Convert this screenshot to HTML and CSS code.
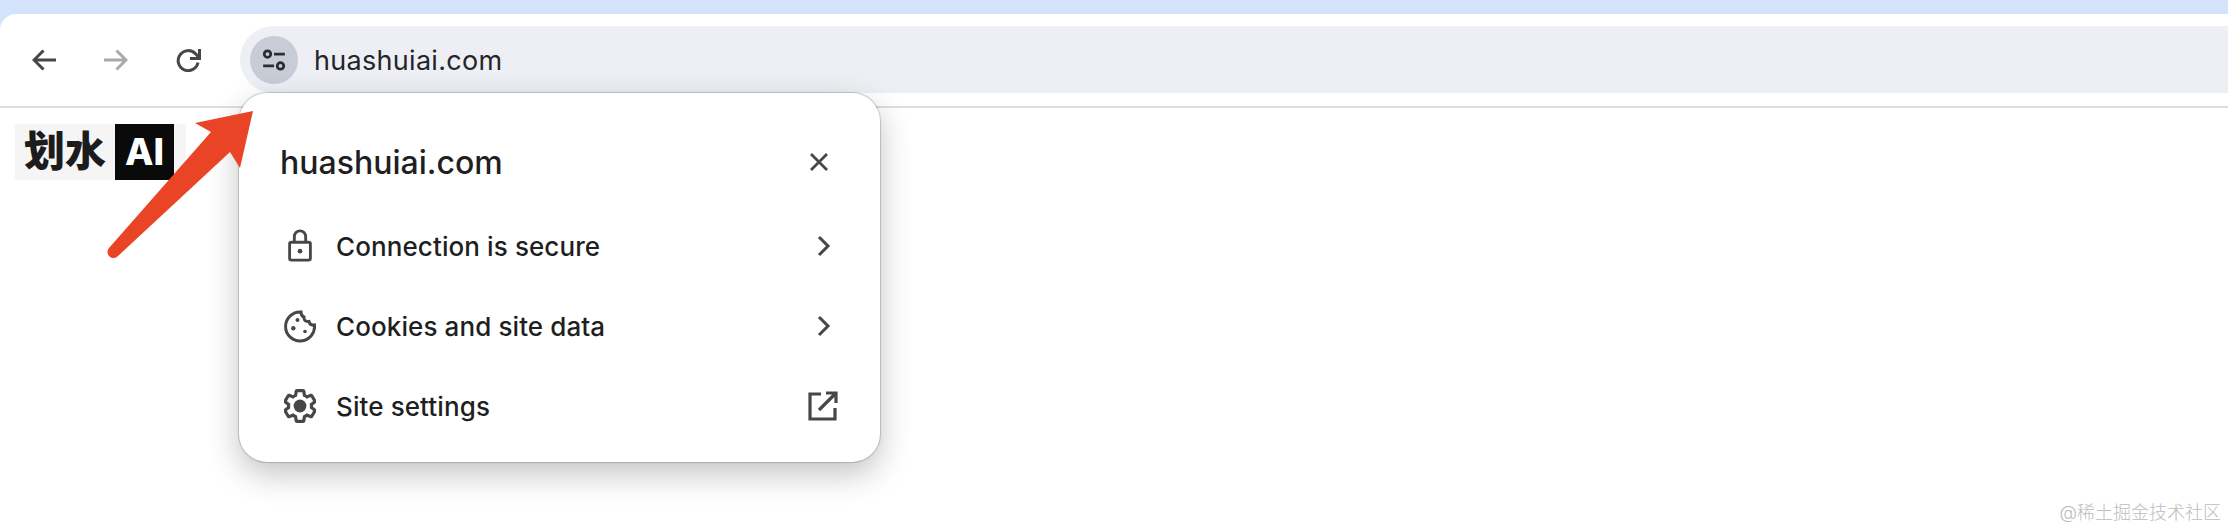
FILE: index.html
```html
<!DOCTYPE html>
<html lang="en">
<head>
  <meta charset="UTF-8" />
  <title>huashuiai.com</title>
  <link rel="stylesheet" href="styles.css">
</head>
<body>
  <div class="toolbar">
    <div class="nav">
      <svg class="nav-icon" viewBox="0 0 24 24"><path d="M24 12H2M11.5 2.5 2 12l9.500 9.500"/></svg>
      <svg class="nav-icon disabled" viewBox="0 0 24 24"><path d="M0 12h22M12.500 2.500 22 12l-9.500 9.500"/></svg>
      <svg class="nav-icon" viewBox="0 0 25 24"><path d="M22 14.500A10 10 0 1 1 19.500 5.800L23 9.500M23.500 1v9.500H14"/></svg>
    </div>
    <div class="omnibox">
      <div class="chip">
        <svg viewBox="0 0 24 24">
          <circle cx="6" cy="6.500" r="3"/>
          <path d="M12 6.500h10M2 17.500h10"/>
          <circle cx="18" cy="17.500" r="3"/>
        </svg>
      </div>
      <span class="url">huashuiai.com</span>
    </div>
  </div>

  <div class="content">
    <div class="logo"><span class="logo-cn">划水</span><span class="logo-ai">AI</span></div>
  </div>
  <div class="watermark">@稀土掘金技术社区</div>

  <div class="popup">
    <div class="popup-head">
      <h1>huashuiai.com</h1>
      <svg class="close" viewBox="0 0 20 20"><path d="M2 2l16 16M18 2 2 18"/></svg>
    </div>
    <div class="row">
      <svg class="row-icon" viewBox="0 0 32 36">
        <rect x="5" y="14" width="22" height="19" rx="2"/>
        <path d="M10 14V8a6 6 0 0 1 12 0v6"/>
        <circle class="dot" cx="16" cy="23.500" r="2.500"/>
      </svg>
      <span class="row-label">Connection is secure</span>
      <svg class="chevron" viewBox="0 0 30 24"><path d="M11 3l9 9-9 9"/></svg>
    </div>
    <div class="row">
      <svg class="row-icon" viewBox="0 0 32 32">
        <path d="M17 2A14.500 14.500 0 1 0 30.500 15c-3 .5-5-1-5.500-3.500-3 .5-5.500-1.500-5-4.500-2-.5-3-2.500-3-5z"/>
        <circle class="dot" cx="13.500" cy="10" r="2"/>
        <circle class="dot" cx="9.300" cy="18.300" r="2.200"/>
        <circle class="dot" cx="21" cy="21.500" r="1.800"/>
      </svg>
      <span class="row-label">Cookies and site data</span>
      <svg class="chevron" viewBox="0 0 30 24"><path d="M11 3l9 9-9 9"/></svg>
    </div>
    <div class="row">
      <svg class="row-icon" viewBox="2 2 20 20">
        <path class="thin" d="M19.140 12.940c.04-.3.06-.61.06-.94 0-.32-.02-.64-.07-.94l2.030-1.580c.18-.14.23-.41.12-.61l-1.920-3.320c-.12-.22-.37-.29-.59-.22l-2.390.96c-.5-.38-1.030-.7-1.620-.94l-.36-2.540c-.04-.24-.24-.41-.48-.41h-3.840c-.24 0-.43.17-.47.41l-.36 2.540c-.59.24-1.130.57-1.620.94l-2.390-.96c-.22-.08-.47 0-.59.22L2.740 8.870c-.12.21-.08.47.12.61l2.030 1.580c-.05.3-.09.63-.09.94s.02.64.07.94l-2.030 1.580c-.18.14-.23.41-.12.61l1.920 3.320c.12.22.37.29.59.22l2.390-.96c.5.38 1.030.7 1.620.94l.36 2.540c.05.24.24.41.48.41h3.840c.24 0 .44-.17.47-.41l.36-2.540c.59-.24 1.130-.56 1.620-.94l2.390.96c.22.08.47 0 .59-.22l1.920-3.320c.12-.22.07-.47-.12-.61l-2.010-1.580z"/>
        <circle class="dot" cx="12" cy="12" r="4"/>
      </svg>
      <span class="row-label">Site settings</span>
      <svg class="external" viewBox="0 0 30 30"><path d="M13 3H2v25h25V17M11 19 28 2M18 2h10v10"/></svg>
    </div>
  </div>

  <svg class="arrow" viewBox="0 0 160 160">
    <path d="M150 5 137 62 127 46 15 150a6 6 0 0 1-9-8L108 26 92 17z"/>
  </svg>
</body>
</html>
```

FILE: styles.css
```css
html, body {
  margin: 0;
  height: 100%;
}
body {
  display: flex;
  flex-direction: column;
  height: 530px;
  overflow: hidden;
  background: #d3e3fb;
  font-family: Inter, "Noto Sans CJK SC", sans-serif;
  color: #1f1f1f;
}

/* browser toolbar */
.toolbar {
  display: flex;
  align-items: flex-start;
  flex: none;
  height: 92px;
  margin-top: 14px;
  padding-top: 12px;
  padding-left: 32px;
  box-sizing: border-box;
  background: #ffffff;
  border-top-left-radius: 16px;
}
.nav {
  display: flex;
  align-items: center;
  gap: 48px;
  height: 68px;
  margin-right: 39px;
}
.nav-icon {
  width: 24px;
  height: 24px;
  fill: none;
  stroke: #474747;
  stroke-width: 3;
}
.nav-icon:last-child {
  width: 25px;
}
.nav-icon.disabled {
  stroke: #a9a9a9;
}
.omnibox {
  display: flex;
  flex: 1;
  align-items: center;
  gap: 16px;
  height: 67px;
  padding-left: 10px;
  background: #eeeff4;
  border-radius: 34px 0 0 34px;
}
.chip {
  display: flex;
  align-items: center;
  justify-content: center;
  width: 48px;
  height: 48px;
  border-radius: 50%;
  background: #c7ccd6;
}
.chip svg {
  width: 26px;
  height: 26px;
  fill: none;
  stroke: #2b2d31;
  stroke-width: 2.600;
}
.url {
  padding-top: 2px;
  font-size: 27px;
  letter-spacing: 0.3px;
  color: #242528;
}

/* page underneath */
.content {
  flex: 1;
  padding-top: 16px;
  padding-left: 15px;
  background: #ffffff;
  border-top: 2px solid #dedede;
}
.logo {
  display: flex;
  width: 171px;
  height: 56px;
  background: #f5f5f5;
  font-weight: 900;
}
.logo-cn {
  width: 100px;
  font-size: 41px;
  line-height: 54px;
  text-align: center;
  color: #1c1c1c;
}
.logo-ai {
  width: 59px;
  font-size: 37px;
  font-weight: 800;
  line-height: 56px;
  text-align: center;
  color: #ffffff;
  background: #0a0a0a;
}
.watermark {
  flex: none;
  padding: 0 7px 7px 0;
  background: #ffffff;
  font-size: 18px;
  line-height: 20px;
  font-weight: 300;
  text-align: right;
  color: #bcbcbc;
}

/* site info bubble */
.popup {
  position: absolute;
  top: 93px;
  left: 239px;
  width: 641px;
  height: 369px;
  box-sizing: border-box;
  padding-top: 39px;
  background: #ffffff;
  border-radius: 28px;
  box-shadow: 0 0 1px 1px rgba(0, 0, 0, 0.18), 0 12px 32px rgba(0, 0, 0, 0.24);
}
.popup-head {
  display: flex;
  align-items: center;
  justify-content: space-between;
  height: 60px;
  margin-bottom: 14px;
  padding: 0 51px 0 41px;
}
.popup-head h1 {
  margin: 0;
  font-size: 32px;
  font-weight: 500;
}
.close {
  width: 20px;
  height: 20px;
  fill: none;
  stroke: #474747;
  stroke-width: 2.800;
}
.row {
  display: flex;
  align-items: center;
  height: 80px;
  padding: 0 42px 0 45px;
}
.row-icon {
  width: 32px;
  height: 34px;
  flex: none;
  margin-right: 20px;
  fill: none;
  stroke: #474747;
  stroke-width: 3;
}
.row-icon .thin {
  stroke-width: 2;
}
.row-icon .dot {
  fill: #474747;
  stroke: none;
}
.row-label {
  flex: 1;
  font-size: 26px;
  font-weight: 500;
  letter-spacing: 0.1px;
}
.chevron {
  width: 30px;
  height: 24px;
  fill: none;
  stroke: #474747;
  stroke-width: 3;
}
.external {
  width: 30px;
  height: 30px;
  fill: none;
  stroke: #474747;
  stroke-width: 3.200;
}

/* annotation drawn on top of the screenshot */
.arrow {
  position: absolute;
  top: 106px;
  left: 103px;
  width: 160px;
  height: 160px;
  fill: #e94425;
}
```
